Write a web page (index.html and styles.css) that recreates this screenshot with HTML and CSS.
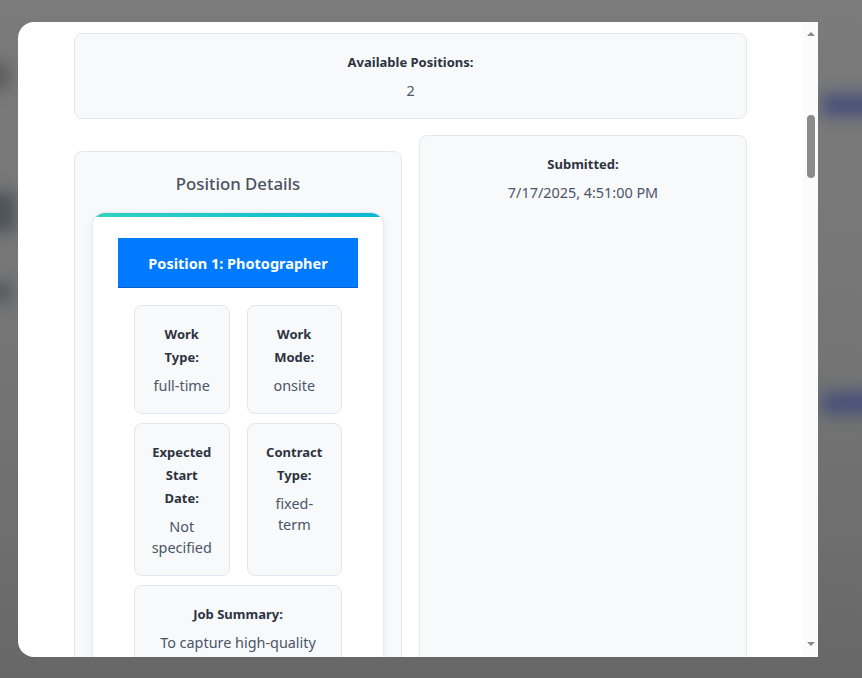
FILE: index.html
```html
<!DOCTYPE html>
<html lang="en">
<head>
<meta charset="utf-8">
<title>Position Details</title>
<link rel="stylesheet" href="styles.css">
</head>
<body>
<div class="backdrop">
  <div class="blob blob-a"></div>
  <div class="blob blob-b"></div>
  <div class="blob blob-c"></div>
  <div class="blob blob-d"></div>
  <div class="blob blob-e"></div>
</div>
<div class="modal">
  <div class="modal-content">
    <div class="info-card">
      <div class="info-label">Available Positions:</div>
      <div class="info-value">2</div>
    </div>
    <div class="columns">
      <div class="positions">
        <h3 class="positions-title">Position Details</h3>
        <div class="pos-card">
          <div class="pos-title">Position 1: Photographer</div>
          <div class="fields">
            <div class="field">
              <div class="field-label">Work Type:</div>
              <div class="field-value">full-time</div>
            </div>
            <div class="field">
              <div class="field-label">Work Mode:</div>
              <div class="field-value">onsite</div>
            </div>
            <div class="field">
              <div class="field-label">Expected Start Date:</div>
              <div class="field-value">Not specified</div>
            </div>
            <div class="field">
              <div class="field-label">Contract Type:</div>
              <div class="field-value">fixed-term</div>
            </div>
            <div class="field field-full">
              <div class="field-label">Job Summary:</div>
              <div class="field-value">To capture high-quality images for events, products and marketing campaigns.</div>
            </div>
          </div>
        </div>
      </div>
      <div class="info-card info-tall">
        <div class="info-label">Submitted:</div>
        <div class="info-value">7/17/2025, 4:51:00 PM</div>
      </div>
    </div>
  </div>
  <div class="scrollbar">
    <div class="arrow arrow-up"></div>
    <div class="track"><div class="thumb"></div></div>
    <div class="arrow arrow-down"></div>
  </div>
</div>
</body>
</html>
```
FILE: styles.css
```css
* { box-sizing: border-box; }
html, body { margin: 0; padding: 0; }
body {
  width: 862px;
  height: 678px;
  overflow: hidden;
  font-family: "Noto Sans", "Open Sans", sans-serif;
  background: linear-gradient(180deg, #7b7b7b 0%, #777 40%, #6e6e6e 80%, #676767 100%);
  position: relative;
}
.backdrop { position: absolute; inset: 0; overflow: hidden; }
.blob { position: absolute; filter: blur(8px); }
.blob-a { left: 822px; top: 94px; width: 60px; height: 22px; background: #46507a; }
.blob-b { left: 822px; top: 392px; width: 60px; height: 22px; background: #46507a; }
.blob-c { left: -14px; top: 192px; width: 30px; height: 40px; background: #4d5259; }
.blob-d { left: -14px; top: 62px; width: 24px; height: 28px; background: #5c5c5c; }
.blob-e { left: -14px; top: 282px; width: 26px; height: 20px; background: #53575b; }

.modal {
  position: absolute;
  left: 18px;
  top: 22px;
  width: 800px;
  height: 635px;
  display: flex;
  background: #fff;
  border-radius: 16px 0 0 16px;
  overflow: hidden;
}
.modal-content {
  flex: 1;
  overflow: hidden;
  padding: 11px 56px 0 56px;
}
.scrollbar {
  width: 15px;
  background: #fbfbfb;
  display: flex;
  flex-direction: column;
  align-items: center;
}
.arrow { width: 0; height: 0; border-left: 4.5px solid transparent; border-right: 4.5px solid transparent; }
.arrow-up { margin-top: 10px; border-bottom: 4px solid #8a8a8a; }
.arrow-down { margin-bottom: 11px; border-top: 4px solid #8a8a8a; }
.track { flex: 1; width: 100%; display: flex; justify-content: center; }
.thumb { margin-top: 79px; width: 8px; height: 63px; border-radius: 4px; background: #8b8b8b; }

.info-card {
  background: #f8f9fb;
  border: 1px solid #e3e7ee;
  border-radius: 8px;
  padding: 17px 16px;
  text-align: center;
}
.info-label {
  font-size: 13px;
  font-weight: 700;
  line-height: 23px;
  color: #2d3340;
}
.info-value {
  margin-top: 6px;
  font-size: 14.4px;
  line-height: 21px;
  color: #4a5568;
}

.columns {
  margin-top: 16px;
  display: grid;
  grid-template-columns: 1fr 1fr;
  column-gap: 17px;
}
.positions {
  margin-top: 16px;
  background: #f8f9fb;
  border: 1px solid #e3e7ee;
  border-radius: 8px;
  padding: 18px 18px 40px;
}
.positions-title {
  margin: 0 0 16px;
  text-align: center;
  font-size: 16.8px;
  line-height: 27px;
  font-weight: 500;
  color: #4a5260;
}
.pos-card {
  background: linear-gradient(90deg, #2fd3bf, #0db6d6) top / 100% 4px no-repeat, #fff;
  border-radius: 12px;
  box-shadow: 0 0 0 1px #e6e9ef, 0 2px 8px rgba(30, 40, 60, 0.08);
  padding: 25px 25px 24px;
}
.pos-title {
  height: 50px;
  background: #007bff;
  border-bottom: 1px solid #0060c8;
  color: #fff;
  font-size: 14.5px;
  font-weight: 700;
  display: flex;
  align-items: center;
  justify-content: center;
}
.fields {
  margin: 17px 16px 0;
  display: grid;
  grid-template-columns: 1fr 1fr;
  column-gap: 17px;
  row-gap: 9px;
}
.field {
  background: #f8f9fb;
  border: 1px solid #e2e7ef;
  border-radius: 8px;
  padding: 17px 15px;
  text-align: center;
}
.field-full { grid-column: 1 / 3; }
.field-label {
  font-size: 13px;
  font-weight: 700;
  line-height: 23px;
  color: #2d3340;
}
.field-value {
  margin-top: 6px;
  font-size: 14.4px;
  line-height: 21px;
  color: #4a5568;
}
```
